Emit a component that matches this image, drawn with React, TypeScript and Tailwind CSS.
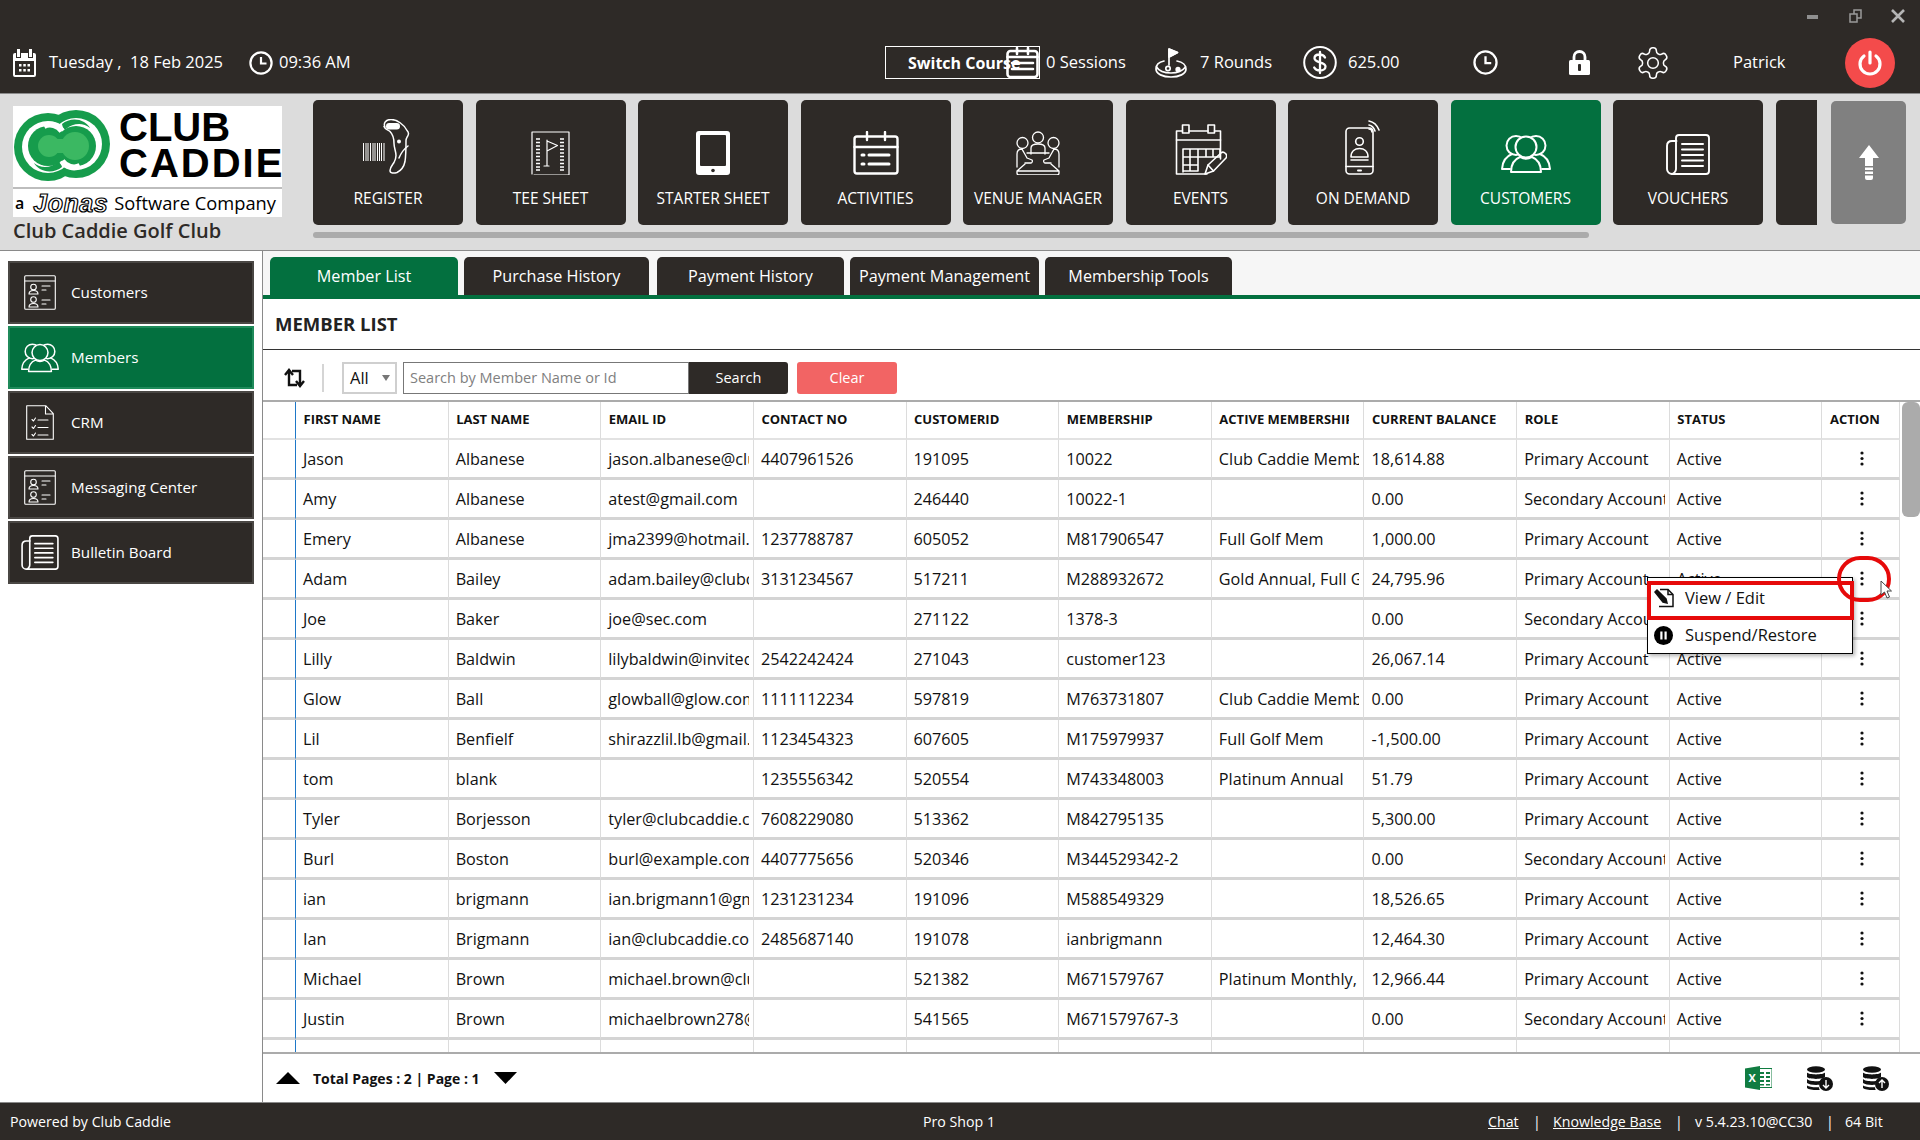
import React from "react";

const S = ({ w, h, vb, children, className = "", sw = 1.5 }: { w: number; h: number; vb?: string; children: React.ReactNode; className?: string; sw?: number }) => (
  <svg width={w} height={h} viewBox={vb ?? `0 0 ${w} ${h}`} fill="none" stroke="currentColor" strokeWidth={sw} strokeLinecap="round" strokeLinejoin="round" className={`shrink-0 ${className}`}>
    {children}
  </svg>
);

const PeopleIcon = ({ w = 50, h = 39 }: { w?: number; h?: number }) => (
  <S w={w} h={h} vb="0 0 50 39" sw={2}>
    <circle cx="15" cy="11.5" r="9.5" />
    <circle cx="35" cy="11.5" r="9.5" />
    <path d="M11 20c-5 2-9.500 6-10 15h8" />
    <path d="M39 20c5 2 9.500 6 10 15h-8" />
    <circle cx="25" cy="13" r="10.500" fill="var(--pf)" />
    <path d="M10 38c0-9 4-13 9-15 3.500 2 8.500 2 12 0 5 2 9 6 9 15z" fill="var(--pf)" />
  </S>
);

const Scanner = () => (
  <S w={50} h={56} sw={1.5}>
    <path d="M22 8c-2-4 1-7.500 6-7.500 6 0 13 5 16 11 1.500 1.500 2 3 1 5-1 2-2 3-2 5 0 4 0 15-1 21-1 5-4 9-8 11-3 1-7 1-7-2 0-3 2-5 4-8 1-2 2-4 2-7 0-4-2-8-2-12 0-5-1-9-4-12-2-2-5-2-6-5z" />
    <rect x="23" y="4" width="14" height="6.500" rx="3.200" fill="currentColor" stroke="none" />
    <circle cx="36" cy="22.500" r="2" fill="currentColor" stroke="none" />
    <path d="M45 27c-4 3-7 7-9 12" />
    <g strokeLinecap="butt" strokeWidth="1">
      <path d="M0.500 24v18M3 24v18M5 24v18M7.500 24v18M10 24v18M12 24v18M14.500 24v18M16.500 24v18M18.500 24v18M21 24v18" />
    </g>
  </S>
);

const TeeSheet = () => (
  <S w={39} h={44} sw={1.2}>
    <path d="M1 1h37v43H3M1 1v42" />
    <g strokeWidth="1.500" strokeLinecap="butt">
      <path d="M5 8h4M5 11.500h4M5 15h4M5 18.500h4M5 22h4M5 25.500h4M5 29h4M5 32.500h4M5 36h4M5 39h4" />
      <path d="M29 8h4M29 11.500h4M29 15h4M29 18.500h4M29 22h4M29 25.500h4M29 29h4M29 32.500h4M29 36h4M29 39h4" />
    </g>
    <path d="M16 9v26M13 35h5M16 10l10.500 4.500L16 20" />
  </S>
);

const Tablet = () => (
  <svg width="34" height="44" viewBox="0 0 34 44" className="shrink-0">
    <rect width="34" height="44" rx="3" fill="#fff" />
    <rect x="4" y="4" width="26" height="31" rx="1" fill="#2e2a27" />
    <circle cx="17" cy="39.500" r="1.800" fill="#2e2a27" />
  </svg>
);

const Activities = () => (
  <S w={46} h={44} sw={2.4}>
    <rect x="1.500" y="5.500" width="43" height="37" rx="2.500" />
    <path d="M1.500 16h43M14 1v8M32 1v8" />
    <path d="M9 24h2M9 33h2M16 24h20M16 33h20" strokeWidth="3" />
  </S>
);

const Venue = () => (
  <S w={44} h={44} sw={1.3}>
    <circle cx="22" cy="6.500" r="5.500" />
    <path d="M15 23v-6c0-3 3-4 7-4s7 1 7 4v6" />
    <circle cx="6.500" cy="12" r="5.500" />
    <circle cx="37.500" cy="12" r="5.500" />
    <path d="M1 36V23c0-3 2-5 5-5 1 2 4 7 5 9l5 2c1 1 0 3-1 3H9M43 36V23c0-3-2-5-5-5-1 2-4 7-5 9l-5 2c-1 1 0 3 1 3h6" />
    <path d="M11 22h22M9 33 1 40h42l-8-7M1 40v2c0 1 1 2 2 2h38c1 0 2-1 2-2v-2" />
  </S>
);

const Events = () => (
  <S w={52} h={51} sw={1.6}>
    <path d="M32 50H1.500V7h6M14 7h19M39.500 7h6v28" />
    <rect x="7.500" y="1" width="6.500" height="8" />
    <rect x="33" y="1" width="6.500" height="8" />
    <path d="M1.500 16h44" />
    <path d="M8 25v23M8 25h37M15 25v22M23 25v22M31 25v8M38 25v8M8 33h37M8 41h15M8 47h15M45 25v8" />
    <path d="M30 50l3-9L46 29c1-1 3-1 4.500.5 1.500 1.500 1.500 3 .5 4.500L38.500 47z" />
    <path d="M33 41l5.500 6" />
  </S>
);

const OnDemand = () => (
  <S w={36} h={56} sw={1.6}>
    <rect x="1" y="9" width="27" height="46" rx="3.500" />
    <path d="M1 47.500h27" />
    <path d="M13 51.500h3" strokeWidth="2" />
    <circle cx="14.500" cy="22.500" r="3.800" />
    <path d="M6 38c0-6 4-8.500 8.500-8.500S23 32 23 38zM6 41h17" />
    <path d="M24 2c5 1 8 4 10 9M24 6c3 .5 5 3 6 6M24 10c1.500 0 3 1 3 3" />
  </S>
);

const Vouchers = ({ w = 44, h = 41 }: { w?: number; h?: number }) => (
  <S w={w} h={h} vb="0 0 44 41" sw={1.9}>
    <path d="M10.500 7H6C3 7 1 9 1 12v23c0 3 2.500 5 5 5h34c2 0 3-1 3-3V4c0-2-1-3-3-3H13c-2 0-3 1-3 3v31c0 2-2 5-4.500 5" />
    <path d="M16 10h21M16 15.500h21M16 21h21M16 26.500h21M16 32h21" strokeWidth="2" />
  </S>
);

const ListPeople = () => (
  <S w={32} h={35} sw={1.1}>
    <rect x="0.700" y="0.700" width="30.600" height="33.600" rx="1" />
    <path d="M1 6h30" />
    <circle cx="9.500" cy="12" r="2.800" />
    <path d="M5 19c0-2.500 2-3.500 4.500-3.500S14 16.500 14 19zM18 11h8M18 15h4" />
    <circle cx="9.500" cy="24.500" r="2.800" />
    <path d="M5 32c0-2.500 2-3.500 4.500-3.500S14 29.500 14 32zM18 25h8M18 29h4" />
  </S>
);

const Crm = () => (
  <S w={28} h={35} sw={1.1}>
    <path d="M.7.7h19l7.600 8v25.600H.7zM19.500 1v8h7.500" />
    <path d="M6 14.500l1.500 1.500 2-3M6 22l1.500 1.500 2-3M6 29.500l1.500 1.500 2-3M12 15h10M12 22.500h10M12 30h10" />
  </S>
);

const CalendarSmall = () => (
  <svg width="23" height="28" viewBox="0 0 23 28" className="shrink-0">
    <path d="M4 0h3v8H4zM16 0h3v8h-3z" fill="#fff" />
    <path d="M2 4h1v5h5V4h7v5h5V4h1a2 2 0 0 1 2 2v20a2 2 0 0 1-2 2H2a2 2 0 0 1-2-2V6a2 2 0 0 1 2-2z" fill="#fff" />
    <path d="M2 12h19v14H2z" fill="#2e2a27" />
    <path d="M6 15h2.500v2.500H6zM10.300 15h2.500v2.500h-2.500zM14.500 15H17v2.500h-2.500zM6 20h2.500v2.500H6zM10.300 20h2.500v2.500h-2.500zM14.500 20H17v2.500h-2.500z" fill="#fff" />
  </svg>
);

const Clock = ({ s = 24 }: { s?: number }) => (
  <S w={s} h={s} vb="0 0 24 24" sw={2.200}>
    <circle cx="12" cy="12" r="10.600" />
    <path d="M12 6v6.500h5.500" strokeLinecap="butt" strokeLinejoin="miter" />
  </S>
);

const SessionsIcon = () => (
  <S w={33} h={31} sw={2.600}>
    <rect x="1.500" y="4" width="30" height="26" rx="3" />
    <path d="M11 1v6M22 1v6" />
    <path d="M1.500 10h30M6 16h21M6 22h21" />
  </S>
);

const Golf = () => (
  <S w={32} h={30} sw={1.7}>
    <path d="M14 17V1l8.500 3.500L14 9" />
    <path d="M14 1l8.500 3.500L14 9z" fill="#fff" />
    <path d="M9 13c-5 1-8 4-8 8 0 5 7 8 15 8s15-3 15-8c0-3.500-3-7-9-8" />
    <path d="M1.500 19c2.500 4 8 6 14.500 6s11.500-2 14.500-6" />
    <circle cx="13" cy="20.500" r="2.200" />
    <circle cx="23" cy="21.500" r="1.800" fill="#fff" />
  </S>
);

const Dollar = () => (
  <S w={34} h={33} sw={2}>
    <ellipse cx="17" cy="16.500" rx="15.800" ry="15.500" />
    <path d="M22 11.500c-1-2-3-3-5.500-3-3 0-5 1.500-5 3.800 0 5 11 3 11 8.200 0 2.300-2.200 4-5.500 4-2.800 0-4.800-1-5.800-3M17 6v21" strokeWidth="2.300" />
  </S>
);

const Lock = () => (
  <svg width="21" height="25" viewBox="0 0 21 25" className="shrink-0">
    <path d="M5 11V7a5.500 5.500 0 0 1 11 0v4" fill="none" stroke="#fff" strokeWidth="2.800" />
    <rect y="10" width="21" height="15" rx="1.500" fill="#fff" />
    <rect x="9" y="14" width="3" height="7" rx="1" fill="#2e2a27" />
  </svg>
);

const Gear = () => (
  <svg width="34" height="32" viewBox="1.500 1.500 21 21" fill="none" stroke="#fff" strokeWidth="1" strokeLinejoin="round" className="shrink-0">
    <path d="M12.220 2h-.44a2 2 0 0 0-2 2v.180a2 2 0 0 1-1 1.730l-.43.250a2 2 0 0 1-2 0l-.150-.080a2 2 0 0 0-2.730.730l-.220.380a2 2 0 0 0 .730 2.730l.150.100a2 2 0 0 1 1 1.720v.510a2 2 0 0 1-1 1.740l-.150.090a2 2 0 0 0-.730 2.730l.220.380a2 2 0 0 0 2.730.730l.150-.080a2 2 0 0 1 2 0l.430.250a2 2 0 0 1 1 1.730V20a2 2 0 0 0 2 2h.44a2 2 0 0 0 2-2v-.180a2 2 0 0 1 1-1.730l.430-.250a2 2 0 0 1 2 0l.150.080a2 2 0 0 0 2.730-.730l.220-.390a2 2 0 0 0-.730-2.730l-.150-.080a2 2 0 0 1-1-1.740v-.500a2 2 0 0 1 1-1.740l.150-.090a2 2 0 0 0 .730-2.730l-.220-.380a2 2 0 0 0-2.730-.730l-.150.080a2 2 0 0 1-2 0l-.430-.250a2 2 0 0 1-1-1.730V4a2 2 0 0 0-2-2z" />
    <circle cx="12" cy="12" r="3.500" />
  </svg>
);

const Power = () => (
  <div className="w-[50px] h-[50px] rounded-full bg-[#f44b4b] flex items-center justify-center shrink-0">
    <S w={28} h={28} vb="0 0 28 28" sw={3.200} className="text-white">
      <path d="M14 3v11" />
      <path d="M8 7a10 10 0 1 0 12 0" />
    </S>
  </div>
);

const LogoMark = () => (
  <svg width="96" height="71" viewBox="0 0 96 71" className="shrink-0">
    <circle cx="34" cy="37" r="34" fill="#169c4c" />
    <circle cx="62" cy="34" r="34" fill="#169c4c" />
    <circle cx="34" cy="37" r="26" fill="#fff" />
    <circle cx="62" cy="34" r="26" fill="#fff" />
    <path d="M48 14c6-5 15-6 22-2 3 2 5 4 6 6-7-6-17-5-24 1-2 1-3 0-4-5zM48 57c-6 5-15 6-22 2-3-2-5-4-6-6 7 6 17 5 24-1 2-1 3 0 4 5z" fill="#169c4c" />
    <circle cx="34" cy="36" r="20" fill="#169c4c" />
    <circle cx="62" cy="36" r="20" fill="#169c4c" />
    <path d="M48 21c-4-6-12-8-18-5M48 51c4 6 12 8 18 5" stroke="#fff" strokeWidth="6" fill="none" />
    <circle cx="35" cy="36" r="11" fill="#3bb862" />
    <circle cx="61" cy="36" r="14" fill="#3bb862" />
    <rect x="35" y="29" width="26" height="14" fill="#3bb862" />
  </svg>
);

const Logo = () => (
  <div className="w-[269px] h-[111px] bg-white flex flex-col">
    <div className="flex h-[81px]">
      <div className="pt-[4px] pl-[1px]"><LogoMark /></div>
      <div className="ml-[9px] pt-[4px] font-['Liberation_Sans',sans-serif] font-bold text-black text-[40px] leading-[35.500px] tracking-[2px]">
        <div className="tracking-normal">CLUB</div>
        <div>CADDIE</div>
      </div>
    </div>
    <div className="h-[2px] bg-[#bdbdbd]" />
    <div className="flex items-center h-[28px] pl-[2px] text-black overflow-hidden">
      <span className="text-[16px] font-semibold leading-none">a</span>
      <span className="ml-[9px] w-[71px] text-[25px] leading-none italic font-extrabold text-white [-webkit-text-stroke:1.200px_black] font-['Liberation_Sans',sans-serif] tracking-[0.500px]">Jonas</span>
      <span className="ml-[10px] text-[18.300px] font-medium leading-none whitespace-nowrap">Software Company</span>
    </div>
  </div>
);

const tiles: { label: string; icon: React.ReactNode; active?: boolean }[] = [
  { label: "REGISTER", icon: <Scanner /> },
  { label: "TEE SHEET", icon: <TeeSheet /> },
  { label: "STARTER SHEET", icon: <Tablet /> },
  { label: "ACTIVITIES", icon: <Activities /> },
  { label: "VENUE MANAGER", icon: <Venue /> },
  { label: "EVENTS", icon: <Events /> },
  { label: "ON DEMAND", icon: <OnDemand /> },
  { label: "CUSTOMERS", icon: <div className="mb-[2px] [--pf:#03703f]"><PeopleIcon /></div>, active: true },
  { label: "VOUCHERS", icon: <Vouchers /> },
  { label: "", icon: null },
];

const side: { label: string; icon: React.ReactNode; active?: boolean; ml: number }[] = [
  { label: "Customers", icon: <ListPeople />, ml: 24 },
  { label: "Members", icon: <div className="[--pf:#03703f]"><PeopleIcon w={38} h={31} /></div>, active: true, ml: 21 },
  { label: "CRM", icon: <Crm />, ml: 26 },
  { label: "Messaging Center", icon: <ListPeople />, ml: 24 },
  { label: "Bulletin Board", icon: <Vouchers w={38} h={35} />, ml: 21 },
];

const tabs: { label: string; w: string; m: string; active?: boolean }[] = [
  { label: "Member List", w: "w-[188px]", m: "", active: true },
  { label: "Purchase History", w: "w-[185px]", m: "ml-[6px]" },
  { label: "Payment History", w: "w-[187px]", m: "ml-[8px]" },
  { label: "Payment Management", w: "w-[189px]", m: "ml-[6px]" },
  { label: "Membership Tools", w: "w-[187px]", m: "ml-[6px]" },
];

const headers = ["FIRST NAME", "LAST NAME", "EMAIL ID", "CONTACT NO", "CUSTOMERID", "MEMBERSHIP", "ACTIVE MEMBERSHIP", "CURRENT BALANCE", "ROLE", "STATUS", "ACTION"];

const P = "Primary Account";
const Q = "Secondary Account";
const rows: string[][] = [
  ["Jason", "Albanese", "jason.albanese@clubcaddie.com", "4407961526", "191095", "10022", "Club Caddie Member", "18,614.88", P],
  ["Amy", "Albanese", "atest@gmail.com", "", "246440", "10022-1", "", "0.00", Q],
  ["Emery", "Albanese", "jma2399@hotmail.com", "1237788787", "605052", "M817906547", "Full Golf Mem", "1,000.00", P],
  ["Adam", "Bailey", "adam.bailey@clubcaddie.com", "3131234567", "517211", "M288932672", "Gold Annual, Full Golf", "24,795.96", P],
  ["Joe", "Baker", "joe@sec.com", "", "271122", "1378-3", "", "0.00", Q],
  ["Lilly", "Baldwin", "lilybaldwin@invited.com", "2542242424", "271043", "customer123", "", "26,067.14", P],
  ["Glow", "Ball", "glowball@glow.com", "1111112234", "597819", "M763731807", "Club Caddie Member", "0.00", P],
  ["Lil", "Benfielf", "shirazzlil.lb@gmail.com", "1123454323", "607605", "M175979937", "Full Golf Mem", "-1,500.00", P],
  ["tom", "blank", "", "1235556342", "520554", "M743348003", "Platinum Annual", "51.79", P],
  ["Tyler", "Borjesson", "tyler@clubcaddie.com", "7608229080", "513362", "M842795135", "", "5,300.00", P],
  ["Burl", "Boston", "burl@example.com", "4407775656", "520346", "M344529342-2", "", "0.00", Q],
  ["ian", "brigmann", "ian.brigmann1@gmail.com", "1231231234", "191096", "M588549329", "", "18,526.65", P],
  ["Ian", "Brigmann", "ian@clubcaddie.com", "2485687140", "191078", "ianbrigmann", "", "12,464.30", P],
  ["Michael", "Brown", "michael.brown@clubcaddie.com", "", "521382", "M671579767", "Platinum Monthly, Full", "12,966.44", P],
  ["Justin", "Brown", "michaelbrown278@gmail.com", "", "541565", "M671579767-3", "", "0.00", Q],
];

const Dots = () => (
  <svg width="4" height="15" viewBox="0 0 4 15" className="ml-[38px] mt-[-1px] block">
    <circle cx="2" cy="2" r="1.600" fill="#111" />
    <circle cx="2" cy="7.500" r="1.600" fill="#111" />
    <circle cx="2" cy="13" r="1.600" fill="#111" />
  </svg>
);

const DbIcon = ({ up }: { up?: boolean }) => (
  <svg width="27" height="25" viewBox="0 0 27 25" className="shrink-0">
    <ellipse cx="10" cy="3.500" rx="9" ry="3.200" fill="#111" />
    <path d="M1 6.500c2 2.500 16 2.500 18 0v4.500c-2 2.500-16 2.500-18 0zM1 13c2 2.500 12 2.700 15 1.500-1.500 1-2.500 2.500-2.800 4.300-5 .5-10.200-.3-12.200-1.800zM1 19.500c2 1.500 7 2 12 1.700 0 1 .3 2 .8 2.800-5 .4-11-.3-12.800-2z" fill="#111" />
    <circle cx="20" cy="18" r="7" fill="#111" />
    <path d={up ? "M20 22v-8M17 17l3-3 3 3" : "M20 14v8M17 19l3 3 3-3"} stroke="#fff" strokeWidth="1.400" fill="none" />
  </svg>
);

const Excel = () => (
  <svg width="27" height="24" viewBox="0 0 27 24" className="shrink-0">
    <rect x="9" y="2.500" width="18" height="19" fill="#fff" stroke="#107c41" strokeWidth="1" />
    <path d="M14 6h5v2h-5zM21 6h4v2h-4zM14 10h5v2h-5zM21 10h4v2h-4zM14 14h5v2h-5zM21 14h4v2h-4zM14 18h5v1.500h-5zM21 18h4v1.500h-4z" fill="#107c41" />
    <path d="M0 2.500 15 0v24L0 21.500z" fill="#107c41" />
    <text x="3.500" y="16" fontSize="11" fontWeight="700" fill="#fff" fontFamily="Open Sans, sans-serif">X</text>
  </svg>
);

export default function App() {
  return (
    <div className="relative w-[1920px] h-[1140px] overflow-hidden bg-white font-['Open_Sans',sans-serif] text-[#111]">
      {/* top bar */}
      <header className="h-[94px] bg-[#2e2a27] border-b border-[#8a8a8a] text-white flex flex-col">
        <div className="h-[32px] flex justify-end items-start">
          <div className="mt-[15px] mr-[31px] w-[11px] h-[4px] bg-[#8f8f8f]" />
          <svg width="14" height="14" viewBox="0 0 14 14" className="mt-[9px] mr-[28px]" fill="none" stroke="#9a9a9a" strokeWidth="1.500">
            <path d="M1 5h7v8H1zM5 5V1h7v8H8" />
          </svg>
          <svg width="14" height="14" viewBox="0 0 14 14" className="mt-[9px] mr-[15px]" fill="none" stroke="#b5b5b5" strokeWidth="2.600">
            <path d="M1 1l12 12M13 1L1 13" />
          </svg>
        </div>
        <div className="flex items-center h-[61px] text-[16.500px]">
          <div className="ml-[13px]"><CalendarSmall /></div>
          <span className="ml-[13px] w-[200px] whitespace-pre">Tuesday ,  18 Feb 2025</span>
          <Clock />
          <span className="ml-[6px] w-[606px]">09:36 AM</span>
          <div className="w-[155px] h-[33px] border border-white flex items-center pl-[22px] font-bold text-[16px] whitespace-nowrap shrink-0">Switch Course</div>
          <div className="ml-[-34px]"><SessionsIcon /></div>
          <span className="ml-[7px] w-[109px] whitespace-nowrap">0 Sessions</span>
          <Golf />
          <span className="ml-[13px] w-[103px] whitespace-nowrap">7 Rounds</span>
          <Dollar />
          <span className="ml-[11px] w-[125px]">625.00</span>
          <Clock s={25} />
          <div className="ml-[71px]"><Lock /></div>
          <div className="ml-[46px]"><Gear /></div>
          <span className="ml-[63px] w-[112px]">Patrick</span>
          <Power />
        </div>
      </header>

      {/* nav */}
      <section className="h-[157px] bg-[#dcdcdc] border-b border-[#8a8a8a] flex">
        <div className="w-[313px] shrink-0 pl-[13px] pt-[12px]">
          <Logo />
          <div className="text-[20px] leading-[28px] font-semibold text-[#2e2a27] whitespace-nowrap">Club Caddie Golf Club</div>
        </div>
        <div className="w-[1504px] shrink-0 pt-[6px]">
          <div className="flex gap-[12.500px] w-[1504px] overflow-hidden">
            {tiles.map((t, i) => (
              <div key={i} className={`w-[150px] h-[125px] rounded-[5px] shrink-0 text-white flex flex-col items-center ${t.active ? "bg-[#03703f]" : "bg-[#2e2a27]"}`}>
                <div className="h-[75px] flex items-end justify-center">{t.icon}</div>
                <div className="mt-[13px] text-[15.500px] leading-[20px] whitespace-nowrap">{t.label}</div>
              </div>
            ))}
          </div>
          <div className="mt-[7px] w-[1276px] h-[6px] rounded-[3px] bg-[#ababab]" />
        </div>
        <div className="ml-[14px] mt-[7px] w-[75px] h-[123px] rounded-[5px] bg-[#808080] flex items-center justify-center shrink-0">
          <svg width="20" height="35" viewBox="0 0 20 35" fill="#fff">
            <path d="M10 0l10 13h-6v8H6v-8H0zM6 22.500h8v2.500H6zM6 26.500h8V29H6zM6 30.500h8V33a2 2 0 0 1-2 2H8a2 2 0 0 1-2-2z" />
          </svg>
        </div>
      </section>

      {/* body */}
      <main className="h-[851px] flex">
        <aside className="w-[263px] shrink-0 border-r border-[#8a8a8a] pt-[10px] pl-[8px] flex flex-col gap-[2px]">
          {side.map((s) => (
            <div key={s.label} className={`w-[246px] h-[63px] border-2 flex items-center text-white text-[15.200px] shrink-0 ${s.active ? "bg-[#03703f] border-[#1f8a5a]" : "bg-[#2e2a27] border-[#4a4744]"}`}>
              <div className="w-[61px] shrink-0 flex" style={{ paddingLeft: s.ml - 10 }}>{s.icon}</div>
              <span className="whitespace-nowrap">{s.label}</span>
            </div>
          ))}
        </aside>

        <div className="w-[1657px] shrink-0 flex flex-col">
          <div className="h-[44px] bg-[#f6f6f6] pl-[7px] pt-[6px] flex shrink-0">
            {tabs.map((t) => (
              <div key={t.label} className={`${t.w} ${t.m} h-[38px] rounded-t-[5px] shrink-0 flex items-center justify-center text-white text-[16.200px] whitespace-nowrap ${t.active ? "bg-[#03703f]" : "bg-[#2e2a27]"}`}>
                {t.label}
              </div>
            ))}
          </div>
          <div className="h-[4px] bg-[#03703f] shrink-0" />
          <div className="h-[51px] border-b border-[#333] pl-[12px] flex items-center text-[18.500px] font-bold text-[#222] shrink-0">MEMBER LIST</div>
          <div className="h-[50px] pt-[6px] flex items-center shrink-0">
            <svg width="22" height="20" viewBox="0 0 22 20" fill="none" stroke="#111" strokeWidth="2.400" className="ml-[20px]">
              <path d="M6 3v14h8M2 7l4-5 4 5" />
              <path d="M9 3h8v14M13 13l4 5 4-5" />
            </svg>
            <div className="ml-[17px] w-[2px] h-[28px] bg-[#d5d5d5]" />
            <div className="ml-[18px] w-[55px] h-[32px] border-2 border-[#cfcfcf] flex items-center pl-[6px] text-[16.500px]">
              All
              <svg width="8" height="6" viewBox="0 0 8 6" className="ml-[13px]"><path d="M0 0h8L4 6z" fill="#777" /></svg>
            </div>
            <div className="ml-[6px] w-[286px] h-[32px] border border-[#777] flex items-center pl-[6px] text-[14.500px] text-[#808080] whitespace-nowrap">Search by Member Name or Id</div>
            <div className="w-[99px] h-[32px] bg-[#2e2a27] text-white rounded-r-[3px] flex items-center justify-center text-[14.500px]">Search</div>
            <div className="ml-[9px] w-[100px] h-[32px] bg-[#f26464] text-white rounded-[3px] flex items-center justify-center text-[14.500px]">Clear</div>
          </div>

          <div className="relative h-[654px] border-t-2 border-b-2 border-[#ababab] overflow-hidden shrink-0">
            <table className="table-fixed w-[1636.500px] border-separate border-spacing-0 text-[16.200px]">
              <colgroup>
                <col className="w-[33px]" />
                {headers.slice(0, 10).map((h) => <col key={h} className="w-[152.650px]" />)}
                <col className="w-[77px]" />
              </colgroup>
              <thead>
                <tr>
                  <th className="h-[38px] p-0 border-r border-r-[#1e78c8] border-b-2 border-b-[#e2e2e2]" />
                  {headers.map((h) => (
                    <th key={h} className="h-[38px] p-0 text-left text-[13px] font-bold border-r border-r-[#dcdcdc] border-b-2 border-b-[#e2e2e2]">
                      <div className="pl-[7.500px] mr-[14px] overflow-hidden whitespace-nowrap">{h}</div>
                    </th>
                  ))}
                </tr>
              </thead>
              <tbody>
                {rows.map((r, i) => (
                  <tr key={i}>
                    <td className="h-[40px] p-0 border-r border-r-[#1e78c8] border-b-[3px] border-b-[#d4d4d4]" />
                    {[...r, "Active"].map((c, j) => (
                      <td key={j} className="h-[40px] p-0 border-r border-r-[#dcdcdc] border-b-[3px] border-b-[#d4d4d4]">
                        <div className="pl-[7px] mr-[4px] pt-[1px] overflow-hidden whitespace-nowrap">{c}</div>
                      </td>
                    ))}
                    <td className="h-[40px] p-0 border-r border-r-[#dcdcdc] border-b-[3px] border-b-[#d4d4d4]"><Dots /></td>
                  </tr>
                ))}
                <tr>
                  <td className="h-[40px] p-0 border-r border-r-[#1e78c8]" />
                  {headers.slice(0, 10).map((h) => <td key={h} className="h-[40px] p-0 border-r border-r-[#dcdcdc]" />)}
                  <td className="h-[40px] p-0 border-r border-r-[#dcdcdc]"><Dots /></td>
                </tr>
              </tbody>
            </table>
            <div className="absolute right-0 top-0 w-[18px] h-[115px] rounded-[6px] bg-[#ababab]" />
          </div>

          <div className="h-[48px] flex items-center shrink-0">
            <svg width="24" height="12" viewBox="0 0 24 12" className="ml-[13px]"><path d="M12 0l12 12H0z" fill="#000" /></svg>
            <span className="ml-[13px] w-[181px] font-bold text-[14px] whitespace-nowrap">Total Pages : 2 | Page : 1</span>
            <svg width="23" height="12" viewBox="0 0 23 12"><path d="M0 0h23L11.500 12z" fill="#000" /></svg>
            <div className="ml-[1228px]"><Excel /></div>
            <div className="ml-[34px]"><DbIcon /></div>
            <div className="ml-[29px]"><DbIcon up /></div>
          </div>
        </div>
      </main>

      {/* footer */}
      <footer className="h-[38px] bg-[#2e2a27] border-t border-[#8a8a8a] text-white text-[14.200px] flex items-center">
        <span className="ml-[10px] w-[913px] whitespace-nowrap">Powered by Club Caddie</span>
        <span className="w-[565px] whitespace-nowrap">Pro Shop 1</span>
        <span className="w-[45px] underline">Chat</span>
        <span className="w-[20px]">|</span>
        <span className="w-[122px] underline whitespace-nowrap">Knowledge Base</span>
        <span className="w-[20px]">|</span>
        <span className="w-[131px] whitespace-nowrap">v 5.4.23.10@CC30</span>
        <span className="w-[19px]">|</span>
        <span className="whitespace-nowrap">64 Bit</span>
      </footer>

      {/* context menu + annotations */}
      <div className="absolute left-[1647px] top-[577px] w-[206px] h-[77px] bg-white border border-black shadow-[2px_2px_4px_rgba(0,0,0,0.3)] text-[16.500px]">
        <div className="h-[40px] flex items-center pl-[6px]">
          <svg width="20" height="20" viewBox="0 0 20 20" fill="none" stroke="#111" strokeWidth="1.500">
            <path d="M6 1.500h8l5 5V18.500H5" />
            <path d="M14 1.500v5h5" />
            <path d="M1 4l2-2 9 9 1 4-4-1z" fill="#111" />
          </svg>
          <span className="ml-[11px]">View / Edit</span>
        </div>
        <div className="h-[35px] flex items-center pl-[6px]">
          <svg width="19" height="19" viewBox="0 0 19 19">
            <circle cx="9.500" cy="9.500" r="9.500" fill="#000" />
            <path d="M6.300 5.500h2.200v8H6.300zM10.500 5.500h2.200v8h-2.200z" fill="#fff" />
          </svg>
          <span className="ml-[12px]">Suspend/Restore</span>
        </div>
      </div>
      <div className="absolute left-[1647px] top-[581px] w-[207px] h-[39px] border-4 border-[#e60a0a]" />
      <div className="absolute left-[1837px] top-[556px] w-[54px] h-[46px] rounded-full border-4 border-[#e60a0a]" />
      <svg width="13" height="19" viewBox="0 0 13 19" className="absolute left-[1880px] top-[580px]">
        <path d="M1 1v14l3.500-3 2.500 6 2.500-1-2.500-6h4.500z" fill="#fff" stroke="#444" strokeWidth="1" />
      </svg>
    </div>
  );
}
